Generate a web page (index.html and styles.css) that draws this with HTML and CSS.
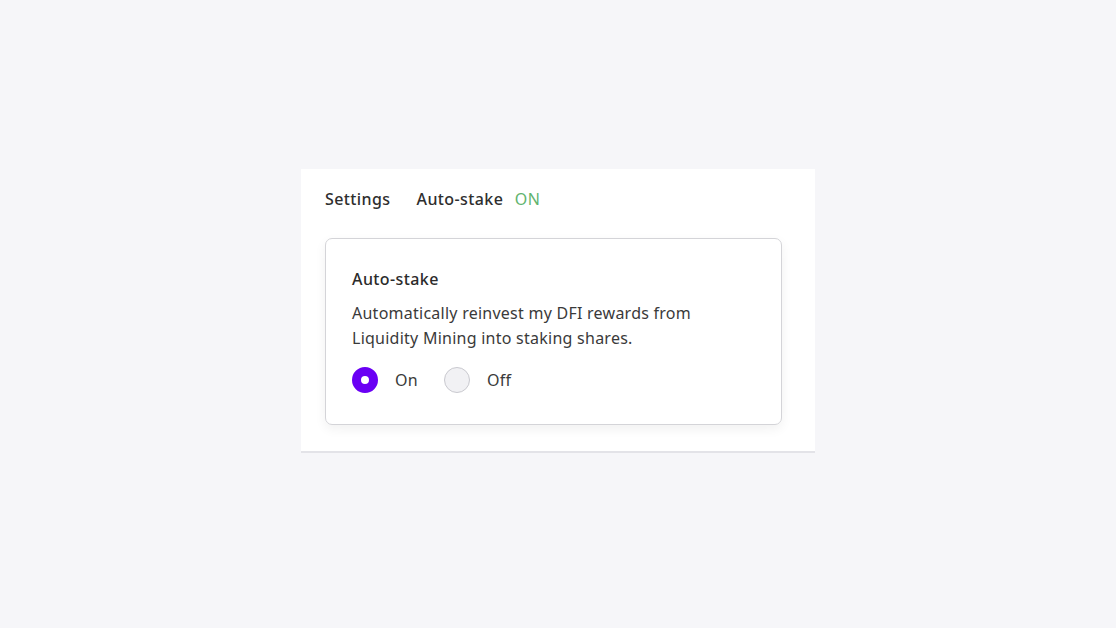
FILE: index.html
```html
<!DOCTYPE html>
<html lang="en">
<head>
<meta charset="utf-8">
<title>Settings</title>
<link rel="stylesheet" href="styles.css">
</head>
<body>
<main class="stage">
  <section class="panel">
    <header class="panel-head">
      <span class="head-title">Settings</span>
      <span class="head-status">Auto-stake <span class="status-on">ON</span></span>
    </header>
    <div class="card">
      <h2 class="card-title">Auto-stake</h2>
      <p class="card-desc">Automatically reinvest my DFI rewards from<br>Liquidity Mining into staking shares.</p>
      <div class="radios">
        <label class="radio">
          <span class="dot dot-on"></span>
          <span class="radio-label">On</span>
        </label>
        <label class="radio">
          <span class="dot dot-off"></span>
          <span class="radio-label">Off</span>
        </label>
      </div>
    </div>
  </section>
</main>
</body>
</html>
```
FILE: styles.css
```css
html, body {
  margin: 0;
  padding: 0;
}
body {
  background: #f6f6f9;
  font-family: "Noto Sans", "Open Sans", sans-serif;
  color: #2b2b2b;
}
.stage {
  display: flex;
  justify-content: center;
  padding-top: 169px;
}
.panel {
  width: 514px;
  box-sizing: border-box;
  background: #ffffff;
  padding: 19px 33px 26px 24px;
  border-bottom: 2px solid #e3e3e8;
}
.panel-head {
  display: flex;
  align-items: baseline;
  gap: 26px;
  font-size: 16px;
  font-weight: 500;
  line-height: 22px;
  letter-spacing: 0.4px;
  color: #2e2e2e;
}
.status-on {
  color: #62b46e;
  font-weight: 400;
  margin-left: 7px;
}
.card {
  margin-top: 28px;
  border: 1px solid #d4d4d8;
  border-radius: 7px;
  box-shadow: 0 4px 12px rgba(0, 0, 0, 0.06);
  padding: 30px 26px 31px 26px;
}
.card-title {
  margin: 0;
  font-size: 16px;
  font-weight: 500;
  line-height: 20px;
  letter-spacing: 0.4px;
  color: #2b2b2b;
}
.card-desc {
  margin: 12px 0 0;
  font-size: 16px;
  line-height: 25px;
  letter-spacing: 0.25px;
  color: #3a3a3a;
}
.radios {
  display: flex;
  align-items: center;
  gap: 26px;
  margin-top: 16px;
}
.radio {
  display: flex;
  align-items: center;
  gap: 17px;
  font-size: 16px;
  letter-spacing: 0.25px;
  color: #3a3a3a;
}
.dot {
  width: 26px;
  height: 26px;
  border-radius: 50%;
  box-sizing: border-box;
}
.dot-on {
  border: 9px solid #6a00f4;
  background: #ffffff;
}
.dot-off {
  border: 1px solid #c9c9cf;
  background: #f1f1f4;
}
```
